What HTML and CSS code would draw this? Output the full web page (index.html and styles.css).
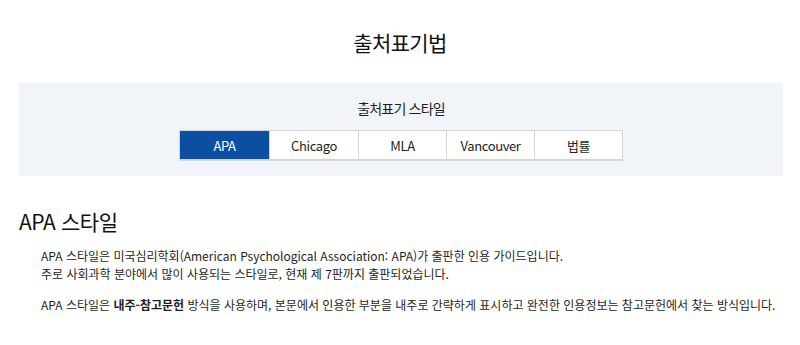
FILE: index.html
```html
<!DOCTYPE html>
<html lang="ko">
<head>
<meta charset="utf-8">
<title>출처표기법</title>
<link rel="stylesheet" href="styles.css">
</head>
<body>
<h1 class="page-title">출처표기법</h1>
<section class="style-panel">
  <h2 class="panel-title">출처표기 스타일</h2>
  <nav class="tabs">
    <a class="tab tab-active">APA</a>
    <a class="tab">Chicago</a>
    <a class="tab">MLA</a>
    <a class="tab">Vancouver</a>
    <a class="tab">법률</a>
  </nav>
</section>
<section class="content">
  <h3 class="content-title">APA 스타일</h3>
  <p class="desc">APA 스타일은 미국심리학회(American Psychological Association: APA)가 출판한 인용 가이드입니다.<br>주로 사회과학 분야에서 많이 사용되는 스타일로, 현재 제 7판까지 출판되었습니다.</p>
  <p class="desc">APA 스타일은 <strong>내주-참고문헌</strong> 방식을 사용하며, 본문에서 인용한 부분을 내주로 간략하게 표시하고 완전한 인용정보는 참고문헌에서 찾는 방식입니다.</p>
</section>
</body>
</html>
```
FILE: styles.css
```css
html, body {
  margin: 0;
  padding: 0;
  background: #ffffff;
}
body {
  font-family: "Noto Sans CJK KR", "Noto Sans", sans-serif;
  color: #1e1e1e;
}
.page-title {
  margin: 0;
  padding: 27px 0 26px;
  font-size: 21px;
  line-height: 30px;
  font-weight: 400;
  letter-spacing: -0.6px;
  text-align: center;
  color: #111111;
}
.style-panel {
  margin: 0 17px 0 19px;
  padding: 15px 0 16px;
  background: #f1f5fa;
  display: flex;
  flex-direction: column;
  align-items: center;
  gap: 12px;
}
.panel-title {
  margin: 0;
  font-size: 14px;
  line-height: 20px;
  font-weight: 400;
  letter-spacing: -0.8px;
  color: #1e1e1e;
}
.tabs {
  display: grid;
  grid-template-columns: 89px 89px 88px 88px 88px;
  border: 1px solid #d4d4d4;
  box-shadow: 0 1px 0 #d8d8d8;
  background: #ffffff;
}
.tab {
  height: 28px;
  display: flex;
  align-items: center;
  justify-content: center;
  font-size: 13px;
  letter-spacing: -0.4px;
  color: #1e1e1e;
  border-left: 1px solid #d4d4d4;
}
.tab:first-child {
  border-left: none;
}
.tab-active {
  background: #0b4ea2;
  color: #ffffff;
}
.content {
  padding: 31px 0 0 19px;
}
.content-title {
  margin: 0 0 12px;
  font-size: 21px;
  line-height: 28px;
  font-weight: 400;
  letter-spacing: -0.4px;
  color: #111111;
}
.desc {
  margin: 0 0 13px 22px;
  font-size: 12px;
  line-height: 18px;
  letter-spacing: 0;
  color: #1e1e1e;
}
.desc strong {
  font-weight: 700;
}
```
